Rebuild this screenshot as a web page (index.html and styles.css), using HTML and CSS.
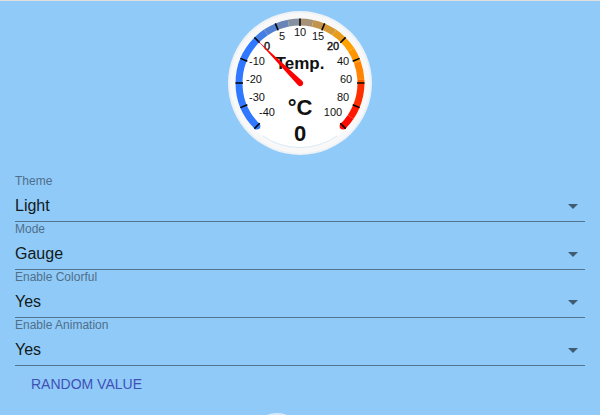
FILE: index.html
```html
<!DOCTYPE html>
<html lang="en">
<head>
<meta charset="utf-8">
<title>Gauge</title>
<link rel="stylesheet" href="styles.css">
</head>
<body>
<main class="page">
  <svg class="gauge" viewBox="-72 -72 144 144" role="img" aria-label="Temperature gauge">
    <circle class="bezel" r="72"/>
    <circle class="bezel-inner" r="70"/>
    <circle class="face" r="65"/>
    <path class="face-edge" d="M-37 53A65 65 0 0 0 37 53"/>
    <g class="band">
      <g class="cap">
        <path d="M-43.1 43.1h.01" stroke="#2f78ff"/>
        <path d="M43.1 43.1h.01" stroke="#ff0800"/>
      </g>
      <g id="arcs"></g>
    </g>
    <g id="ticks" class="ticks"></g>
    <g class="scale">
      <text x="-33" y="29">-40</text>
      <text x="-43" y="14">-30</text>
      <text x="-46" y="-4">-20</text>
      <text x="-43" y="-22">-10</text>
      <text class="strong" x="-33" y="-37">0</text>
      <text x="-18" y="-47">5</text>
      <text x="0" y="-51">10</text>
      <text x="18" y="-47">15</text>
      <text class="strong" x="33" y="-37">20</text>
      <text x="43" y="-22">40</text>
      <text x="46" y="-4">60</text>
      <text x="43" y="14">80</text>
      <text x="33" y="29">100</text>
    </g>
    <text class="title" x="0" y="-14">Temp.</text>
    <text class="unit" x="0" y="32">°C</text>
    <text class="value" x="0" y="58">0</text>
    <path class="needle" d="M-43 -43L2 -2.200A3 3 0 1 1 -2.200 2Z"/>
  </svg>

  <form class="controls">
    <div class="field">
      <label for="theme">Theme</label>
      <select id="theme"><option>Light</option><option>Dark</option></select>
      <svg class="arrow" viewBox="0 0 10 5" aria-hidden="true"><path d="M0 0h10L5 5z"/></svg>
    </div>
    <div class="field">
      <label for="mode">Mode</label>
      <select id="mode"><option>Gauge</option></select>
      <svg class="arrow" viewBox="0 0 10 5" aria-hidden="true"><path d="M0 0h10L5 5z"/></svg>
    </div>
    <div class="field">
      <label for="colorful">Enable Colorful</label>
      <select id="colorful"><option>Yes</option><option>No</option></select>
      <svg class="arrow" viewBox="0 0 10 5" aria-hidden="true"><path d="M0 0h10L5 5z"/></svg>
    </div>
    <div class="field">
      <label for="animation">Enable Animation</label>
      <select id="animation"><option>Yes</option><option>No</option></select>
      <svg class="arrow" viewBox="0 0 10 5" aria-hidden="true"><path d="M0 0h10L5 5z"/></svg>
    </div>
    <button class="random" type="button">RANDOM VALUE</button>
  </form>
  <div class="bubble"></div>
</main>
<script src="gauge.js"></script>
</body>
</html>
```

FILE: styles.css
```css
* {
  box-sizing: border-box;
}

body {
  margin: 0;
  background: #90caf9;
  font-family: "Liberation Sans", Arial, sans-serif;
}

.page {
  display: flex;
  flex-direction: column;
  height: 100vh;
  overflow: hidden;
  border-top: 1px solid #dfdfdf;
  padding: 10px 15px 0;
}

.gauge {
  width: 144px;
  align-self: center;
  flex: none;
}

.bezel {
  fill: #edf2f7;
}

.bezel-inner {
  fill: #f8f8f9;
}

.face {
  fill: #fff;
}

.face-edge {
  fill: none;
  stroke: #d9e9f5;
  stroke-width: 1;
}

.band {
  fill: none;
  stroke-width: 7;
}

.cap {
  stroke-linecap: round;
}

.ticks {
  stroke: #000;
  stroke-width: 1.5;
}

.gauge text {
  text-anchor: middle;
  dominant-baseline: central;
  fill: #111;
}

.scale {
  font-size: 11px;
}

.gauge .strong {
  stroke: #111;
  stroke-width: 0.4;
}

.gauge .title,
.gauge .unit,
.gauge .value {
  dominant-baseline: alphabetic;
  font-weight: bold;
}

.title {
  font-size: 17px;
}

.unit,
.value {
  font-size: 22px;
}

.needle {
  fill: #f00;
}

.controls {
  display: flex;
  flex-direction: column;
  align-items: stretch;
  padding-top: 19px;
}

.field {
  display: grid;
  grid-template-rows: 16px 32px;
  position: relative;
}

.field label {
  color: #4f6f89;
  font-size: 12px;
  line-height: 14px;
}

.field select {
  appearance: none;
  width: 100%;
  border: 0;
  border-bottom: 1px solid #53758f;
  border-radius: 0;
  padding: 0 24px 0 0;
  background: transparent;
  color: #121a20;
  font: 16px "Liberation Sans", Arial, sans-serif;
}

.arrow {
  position: absolute;
  right: 7px;
  bottom: 13px;
  width: 10px;
  height: 5px;
  fill: #415b70;
  pointer-events: none;
}

.random {
  align-self: flex-start;
  height: 36px;
  border: 0;
  padding: 0 16px;
  background: transparent;
  color: #3f51b5;
  font: 14px "Liberation Sans", Arial, sans-serif;
}

.bubble {
  align-self: center;
  flex: none;
  width: 56px;
  height: 56px;
  margin: 11px 46px 0 0;
  border-radius: 50%;
  background: #d5eafc;
}
```

FILE: gauge.js
```js
const NS = "http://www.w3.org/2000/svg";
const point = (deg, r) => {
  const a = deg * Math.PI / 180;
  return `${(r * Math.cos(a)).toFixed(2)} ${(r * Math.sin(a)).toFixed(2)}`;
};
const add = (id, d, stroke) => {
  const path = document.createElementNS(NS, "path");
  path.setAttribute("d", d);
  if (stroke) path.setAttribute("stroke", stroke);
  document.getElementById(id).append(path);
};

// Each entry: end of the segment in degrees along the 270 degree dial, and its colour.
const bands = [
  [90, "#2f78ff"], [101, "#437ee6"], [112.5, "#5280d2"], [124, "#6885b5"],
  [135, "#8590a0"], [147, "#a69277"], [158, "#c1944d"], [169, "#d49835"],
  [180, "#e79c1c"], [192, "#ffa100"], [205, "#ff9500"], [222, "#ff8400"],
  [226, "#ff5b00"], [247.5, "#ff2e00"], [259, "#ff1900"], [270, "#ff0800"]
];
let start = 0;
for (const [end, color] of bands) {
  add("arcs", `M${point(135 + start, 61)}A61 61 0 0 1 ${point(135 + end, 61)}`, color);
  start = end;
}

for (let i = 0; i <= 12; i++) {
  const deg = 135 + i * 22.5;
  add("ticks", `M${point(deg, 57)}L${point(deg, 64.5)}`);
}
```
